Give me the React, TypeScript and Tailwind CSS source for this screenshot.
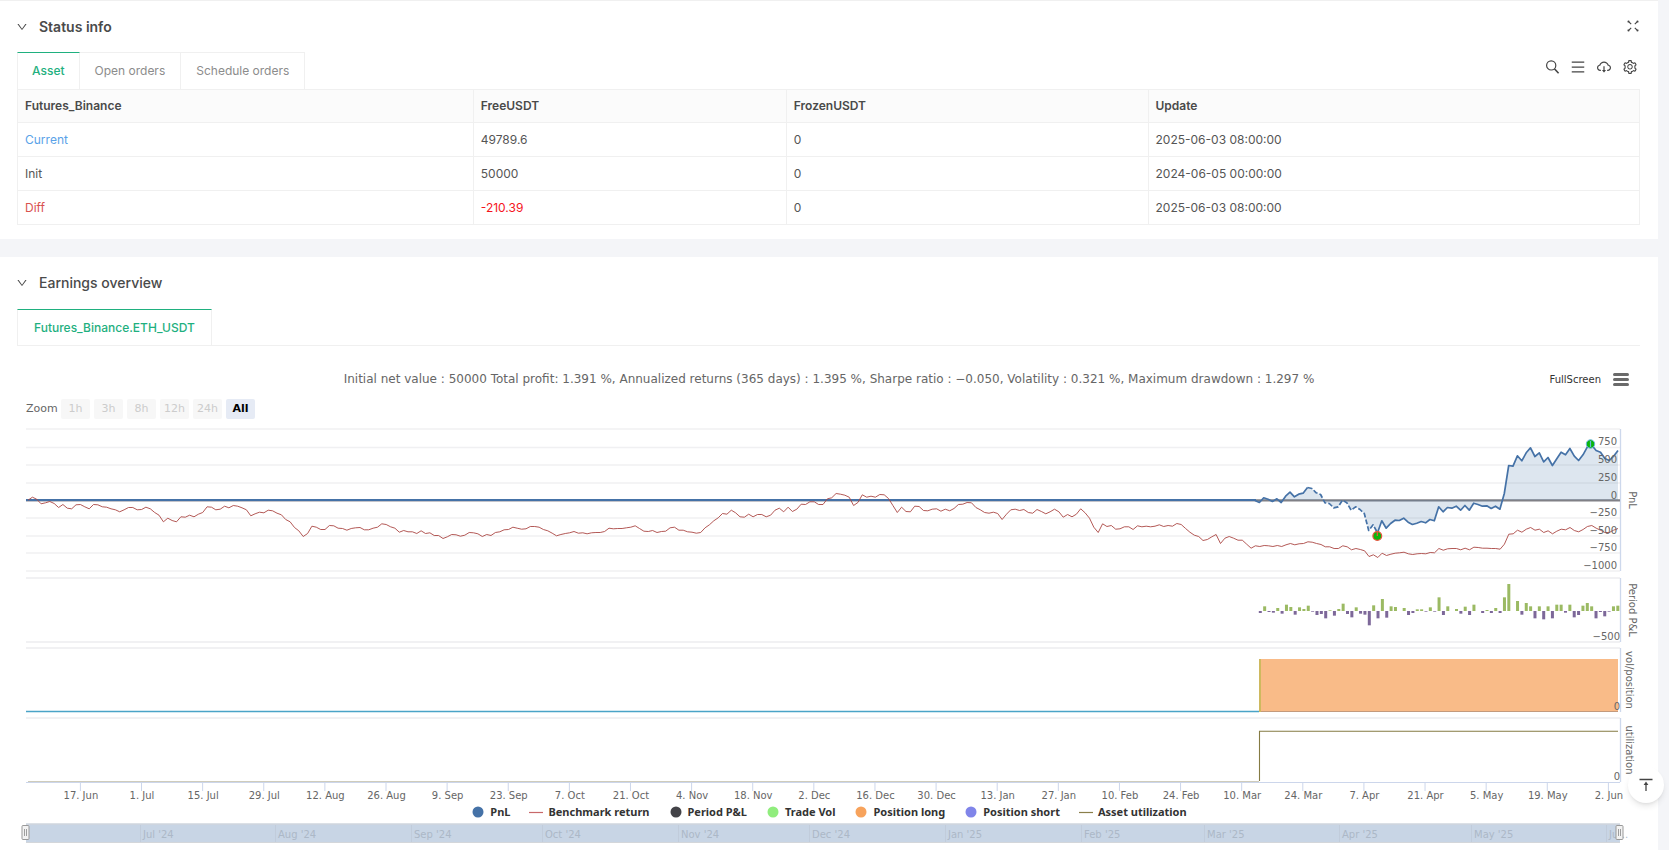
import { useState } from "react";
import {
  AiOutlineCloudDownload,
  AiOutlineDown,
  AiOutlineMenu,
  AiOutlineSetting,
} from "react-icons/ai";

const assetRows = [
  { name: "Current", free: "49789.6", frozen: "0", update: "2025-06-03 08:00:00", nameColor: "text-[#5aa2e8]", freeColor: "" },
  { name: "Init", free: "50000", frozen: "0", update: "2024-06-05 00:00:00", nameColor: "", freeColor: "" },
  { name: "Diff", free: "-210.39", frozen: "0", update: "2025-06-03 08:00:00", nameColor: "text-[#d9534f]", freeColor: "text-[#f5141c]" },
];

const zoomRanges = ["1h", "3h", "8h", "12h", "24h", "All"];

const legendItems = [
  { label: "PnL", color: "#4572a7", shape: "dot" },
  { label: "Benchmark return", color: "#c8686a", shape: "line" },
  { label: "Period P&L", color: "#434348", shape: "dot" },
  { label: "Trade Vol", color: "#90ed7d", shape: "dot" },
  { label: "Position long", color: "#f7a35c", shape: "dot" },
  { label: "Position short", color: "#8085e9", shape: "dot" },
  { label: "Asset utilization", color: "#8a7f4a", shape: "line" },
];

const xLabels = [
  "17. Jun", "1. Jul", "15. Jul", "29. Jul", "12. Aug", "26. Aug", "9. Sep", "23. Sep", "7. Oct",
  "21. Oct", "4. Nov", "18. Nov", "2. Dec", "16. Dec", "30. Dec", "13. Jan", "27. Jan", "10. Feb",
  "24. Feb", "10. Mar", "24. Mar", "7. Apr", "21. Apr", "5. May", "19. May", "2. Jun",
];

const pnlLabels = [
  { text: "750", y: 445 },
  { text: "500", y: 463 },
  { text: "250", y: 481 },
  { text: "0", y: 499 },
  { text: "−250", y: 516 },
  { text: "−500", y: 534 },
  { text: "−750", y: 551 },
  { text: "−1000", y: 569 },
];

const months = [
  { text: "Jul '24", x: 140 },
  { text: "Aug '24", x: 275 },
  { text: "Sep '24", x: 411 },
  { text: "Oct '24", x: 542 },
  { text: "Nov '24", x: 678 },
  { text: "Dec '24", x: 809 },
  { text: "Jan '25", x: 945 },
  { text: "Feb '25", x: 1081 },
  { text: "Mar '25", x: 1204 },
  { text: "Apr '25", x: 1339 },
  { text: "May '25", x: 1471 },
  { text: "Ju…", x: 1606 },
];

// one value per day, three units are one pixel of the plot
const benchmark = [
  1, 10, 4, -10, -7, -3, -9, -21, -12, -23, -25, -13, -12, -19, -25, -12, -13, -19, -20, -25,
  -28, -34, -28, -21, -21, -28, -27, -20, -25, -36, -44, -64, -53, -60, -64, -49, -50, -44, -49, -41,
  -36, -19, -20, -28, -26, -17, -22, -15, -17, -22, -28, -46, -40, -35, -37, -29, -31, -38, -43, -57,
  -64, -81, -91, -108, -99, -77, -80, -87, -87, -75, -76, -83, -84, -89, -84, -82, -81, -88, -88, -83,
  -80, -70, -72, -79, -83, -95, -90, -94, -94, -99, -91, -99, -97, -105, -105, -114, -109, -102, -103, -107,
  -104, -96, -97, -100, -108, -102, -105, -96, -94, -88, -87, -80, -83, -86, -85, -78, -78, -80, -87, -91,
  -98, -106, -102, -99, -97, -93, -98, -97, -100, -97, -96, -96, -93, -83, -85, -84, -84, -82, -80, -76,
  -84, -92, -93, -90, -96, -93, -92, -82, -80, -89, -89, -94, -95, -98, -96, -82, -73, -61, -52, -39,
  -41, -29, -37, -49, -50, -41, -49, -42, -42, -49, -44, -29, -23, -34, -20, -33, -26, -11, -12, -4,
  -4, -12, -12, 5, 8, 21, 19, 16, 10, -15, -6, 17, 10, 13, 10, 18, 17, 6, -15, -36,
  -20, -33, -34, -17, -18, -30, -31, -26, -25, -32, -26, -31, -24, -12, -11, -6, -7, -21, -28, -36,
  -38, -35, -39, -57, -41, -28, -26, -30, -27, -36, -38, -27, -33, -40, -34, -26, -34, -50, -42, -49,
  -41, -25, -37, -53, -80, -96, -70, -78, -75, -86, -85, -79, -79, -87, -76, -79, -77, -79, -77, -73,
  -78, -75, -77, -69, -72, -84, -95, -104, -108, -120, -117, -109, -102, -129, -113, -108, -113, -119, -119, -131,
  -143, -136, -138, -135, -136, -138, -135, -138, -133, -129, -133, -130, -129, -124, -125, -129, -132, -139, -139, -144,
  -144, -136, -139, -148, -144, -147, -151, -168, -163, -171, -158, -165, -161, -158, -157, -155, -160, -162, -160, -159,
  -160, -156, -157, -144, -149, -145, -144, -144, -148, -143, -148, -140, -141, -143, -143, -144, -144, -146, -131, -101,
  -100, -89, -95, -86, -81, -89, -86, -96, -91, -100, -92, -86, -88, -81, -90, -94, -87, -78, -75, -83,
  -89, -96, -96, -89, -84,
];

const pnl = [
  0, -6, 8, 4, -3, 5, -6, 13, 25, 11, 19, 22, 39, 36, 23, 18, -7, -9, -22, -19,
  1, -7, -29, -19, -27, -39, -90, -73, -97, -61, -83, -69, -59, -60, -53, -65, -72, -68, -63, -67,
  -57, -61, -19, -34, -21, -23, -17, -29, -15, -29, -8, -12, -17, -16, -24, -17, -26, 21, 105, 103,
  134, 119, 143, 158, 132, 143, 116, 129, 105, 125, 145, 137, 156, 133, 120, 137, 161, 166, 150, 145,
  126, 120, 133, 150,
];

const periodBars = [
  -6, 14, -3, -5, 9, -8, 19, 12, -11, 11, 6, 16, -2, -12, -9, -22, 2, -14, 6, 22,
  -9, -19, 11, -8, -11, -43, 17, -22, 36, -20, 14, 12, 0, 9, -12, -6, 5, 5, -2, 11,
  -2, 41, -12, 14, 0, 6, -8, 13, -12, 19, 0, -6, 3, -6, 9, -6, 41, 81, 0, 30,
  -11, 24, 14, -22, 14, -25, 14, -22, 19, 19, -5, 19, -19, -12, 16, 24, 14, -22, -3, -16,
  -2, 14, 16,
];

const DASH_START = 12;
const DASH_END = 28;

const ZERO_Y = 500;

function toPoints(values: number[], from: number, to: number) {
  const step = (to - from) / (values.length - 1);
  return values.map((v, i) => `${(from + i * step).toFixed(1)},${(ZERO_Y + 0.5 - v / 3).toFixed(1)}`);
}

const benchmarkPoints = toPoints(benchmark, 28, 1618);
const pnlPoints = toPoints(pnl, 1255, 1618);

function SearchIcon() {
  return (
    <svg viewBox="0 0 16 16" className="size-4" fill="none" stroke="currentColor" strokeWidth="1.2">
      <circle cx="7.2" cy="6.4" r="4.6" />
      <path d="M10.4 9.8 14.6 14.2" strokeWidth="1.6" />
    </svg>
  );
}

function ShrinkIcon() {
  return (
    <svg viewBox="0 0 12 12" className="size-3" fill="none" stroke="currentColor" strokeWidth="1.1">
      <path d="M1 1l3.2 3.2M11 1 7.8 4.2M1 11l3.2-3.2M11 11 7.8 7.8" />
      <path d="M1.2 2.4V1.2h1.2M9.6 1.2h1.2v1.2M1.2 9.6v1.2h1.2M9.6 10.8h1.2V9.6" />
    </svg>
  );
}

function ToTopIcon() {
  return (
    <svg viewBox="0 0 16 16" className="size-4" fill="none" stroke="currentColor" strokeWidth="1.3">
      <path d="M1.5 2.5h13M8 6v8" />
      <path d="M8 4.6 10.4 8H5.6Z" fill="currentColor" stroke="none" />
    </svg>
  );
}

function SectionTitle({ title, bold }: { title: string; bold?: boolean }) {
  return (
    <button type="button" className="flex items-center gap-[11px] text-[#4a4a4a]">
      <AiOutlineDown className="size-3" />
      <h2 className={bold ? "text-sm font-semibold" : "text-sm font-medium"}>{title}</h2>
    </button>
  );
}

function StatusInfo() {
  const [tab, setTab] = useState("Asset");
  return (
    <section className="border-t border-[#f0f0f0] bg-white px-4 pt-3.5 pb-3.5">
      <div className="flex h-6 items-center justify-between">
        <SectionTitle title="Status info" bold />
        <button type="button" aria-label="Shrink" className="pr-[3px] pb-[3px] text-[#444]">
          <ShrinkIcon />
        </button>
      </div>

      <div className="mt-[13px] flex items-end justify-between">
        <div role="tablist" className="flex pl-px text-xs">
          {["Asset", "Open orders", "Schedule orders"].map((t) => (
            <button
              key={t}
              type="button"
              role="tab"
              aria-selected={tab === t}
              onClick={() => setTab(t)}
              className={
                tab === t
                  ? "h-[37px] border-t border-r border-l border-t-[#1fb07f] border-r-[#f0f0f0] border-l-[#f0f0f0] px-3.5 font-medium text-[#1fb07f]"
                  : "h-[37px] border-t border-r border-[#f0f0f0] px-[15px] text-[#8c8c8c]"
              }
            >
              {t}
            </button>
          ))}
        </div>
        <div className="flex items-center gap-2.5 pr-1 pb-3.5 text-[#444]">
          <button type="button" aria-label="Search"><SearchIcon /></button>
          <button type="button" aria-label="List"><AiOutlineMenu className="size-4" /></button>
          <button type="button" aria-label="Download"><AiOutlineCloudDownload className="size-4" /></button>
          <button type="button" aria-label="Settings"><AiOutlineSetting className="size-4" /></button>
        </div>
      </div>

      <div className="pr-0.5 pl-px">
        <table className="w-full table-fixed border-collapse text-left text-xs text-[#555]">
          <colgroup>
            <col className="w-[28.1%]" />
            <col className="w-[19.3%]" />
            <col className="w-[22.3%]" />
            <col />
          </colgroup>
          <thead>
            <tr className="h-[33px] bg-[#fbfbfb] text-[#4a4a4a]">
              {["Futures_Binance", "FreeUSDT", "FrozenUSDT", "Update"].map((h) => (
                <th key={h} className="border border-[#f0f0f0] px-[7px] font-semibold">{h}</th>
              ))}
            </tr>
          </thead>
          <tbody>
            {assetRows.map((row) => (
              <tr key={row.name} className="h-[34px]">
                <td className={`border border-[#f0f0f0] px-[7px] ${row.nameColor}`}>{row.name}</td>
                <td className={`border border-[#f0f0f0] px-[7px] ${row.freeColor}`}>{row.free}</td>
                <td className="border border-[#f0f0f0] px-[7px]">{row.frozen}</td>
                <td className="border border-[#f0f0f0] px-[7px]">{row.update}</td>
              </tr>
            ))}
          </tbody>
        </table>
      </div>
    </section>
  );
}

function Plot() {
  return (
    <svg viewBox="0 424 1658 380" className="block w-full" role="img" aria-label="Profit chart" fontSize="10">
      {/* grid */}
      {[429, 447.5, 465, 483, 518, 536, 553, 571].map((y) => (
        <path key={y} d={`M26 ${y}H1620`} stroke="#f0f0f2" strokeWidth="1.6" />
      ))}
      {[578, 642, 648, 718].map((y) => (
        <path key={y} d={`M26 ${y}H1620`} stroke="#ededef" strokeWidth="1.6" />
      ))}
      <path d="M1620.5 429V571M1620.5 578V642M1620.5 648V712M1620.5 718V782" stroke="#cdd8ec" strokeWidth="1.3" />

      {/* pnl */}
      <path d="M26 501.5H1256" stroke="#c4c4ca" />
      <path d="M1256 500.4H1620" stroke="#808086" strokeWidth="2.4" />
      <path d={`M1255 ${ZERO_Y}L${pnlPoints.join("L")}L1618 ${ZERO_Y}Z`} fill="#4572a7" fillOpacity="0.18" />
      <path d="M26 500H1256" stroke="#4572a7" strokeWidth="2" />
      <g fill="none" stroke="#4572a7" strokeWidth="1.7" strokeLinejoin="round">
        <polyline points={pnlPoints.slice(0, DASH_START + 1).join(" ")} />
        <polyline points={pnlPoints.slice(DASH_START, DASH_END + 1).join(" ")} strokeDasharray="5 2" />
        <polyline points={pnlPoints.slice(DASH_END).join(" ")} />
      </g>
      <polyline points={benchmarkPoints.join(" ")} fill="none" stroke="#aa4643" strokeWidth="0.9" />
      <circle cx="1377.3" cy="536" r="4.4" fill="#0bb60b" stroke="#e8543f" strokeWidth="1.2" />
      <path d="M1377.3 531v5" stroke="#e8543f" strokeWidth="1.2" />
      <circle cx="1590.5" cy="444" r="4.2" fill="#0bb60b" stroke="#6bb6e0" strokeWidth="1" />
      <path d="M1590.5 441v6" stroke="#6bb6e0" strokeWidth="1.2" />

      {/* period p&l */}
      {periodBars.map((v, i) => (
        <rect
          key={i}
          x={1258.8 + i * 4.36}
          y={v > 0 ? 611 - v / 3 : 611}
          width="3"
          height={Math.abs(v) / 3}
          fill={v > 0 ? "#9bba63" : "#7d6899"}
        />
      ))}

      {/* position */}
      <path d="M1259 659H1618V712H1259Z" fill="#f9bb88" />
      <path d="M26 711.5H1259" stroke="#4aa3c7" strokeWidth="1.4" />
      <path d="M1259 711.5H1618" stroke="#c49a7c" strokeWidth="1.2" />
      <path d="M1260 659V712" stroke="#ceb95f" strokeWidth="2" />

      {/* utilization */}
      <path d="M26 782.5H1620" stroke="#ccd6eb" />
      <path d="M28 781.5H1259" stroke="#cfccbb" />
      <path d="M1259.5 781V731.3H1618" fill="none" stroke="#857b43" strokeWidth="1.1" />

      {/* x axis */}
      {xLabels.map((label, i) => (
        <g key={label}>
          <path d={`M${80.4 + i * 61.12} 782V791`} stroke="#ccd6eb" />
          <text x={80.9 + i * 61.12} y="799" textAnchor="middle" fill="#666">{label}</text>
        </g>
      ))}

      {/* y axis labels */}
      <g fill="#666" textAnchor="end">
        {pnlLabels.map((l) => (
          <text key={l.text} x="1617" y={l.y}>{l.text}</text>
        ))}
        <text x="1620" y="640">−500</text>
        <text x="1620" y="710">0</text>
        <text x="1620" y="780">0</text>
      </g>
      <g fill="#666" textAnchor="middle">
        <text transform="translate(1629 500) rotate(90)">PnL</text>
        <text transform="translate(1629 610) rotate(90)">Period P&amp;L</text>
        <text transform="translate(1626 680) rotate(90)">vol/position</text>
        <text transform="translate(1626 750) rotate(90)">utilization</text>
      </g>
    </svg>
  );
}

function Handle({ x }: { x: number }) {
  return (
    <g>
      <rect x={x - 3.5} y="825.5" width="7" height="14" rx="1" fill="#f2f2f2" stroke="#999" />
      <path d={`M${x - 1} 829v7M${x + 1} 829v7`} stroke="#888" strokeWidth="0.8" />
    </g>
  );
}

function Navigator() {
  return (
    <svg viewBox="0 820 1658 26" className="block w-full" role="img" aria-label="Date range" fontSize="10">
      <rect x="26" y="823.5" width="1594" height="19" fill="#c8d5e5" />
      <path d="M26 824H1620M26 842.5H1620" stroke="#d3d6da" />
      {months.map((m) => (
        <g key={m.x}>
          <path d={`M${m.x + 0.5} 825V842`} stroke="#c1ccdb" />
          <text x={m.x + 3} y="838" fill="#acb8c7">{m.text}</text>
        </g>
      ))}
      <Handle x={25.5} />
      <Handle x={1619.5} />
    </svg>
  );
}

function EarningsOverview() {
  const [range, setRange] = useState("All");
  return (
    <section className="grow bg-white pt-3.5">
      <div className="flex h-6 items-center px-4">
        <SectionTitle title="Earnings overview" />
      </div>
      <div role="tablist" className="mt-3.5 mr-[18px] ml-[17px] flex border-b border-[#f0f0f0]">
        <button
          type="button"
          role="tab"
          aria-selected="true"
          className="h-9 border-t border-r border-l border-t-[#1fb07f] border-r-[#f0f0f0] border-l-[#f0f0f0] px-4 text-xs font-medium text-[#1fb07f]"
        >
          Futures_Binance.ETH_USDT
        </button>
      </div>

      <div className="font-['DejaVu_Sans',sans-serif]">
        <div className="mt-[23px] grid grid-cols-[1fr_auto_1fr] items-center text-[#666]">
          <p className="col-start-2 text-xs leading-5">
            Initial net value : 50000 Total profit: 1.391 %, Annualized returns (365 days) : 1.395 %, Sharpe ratio : −0.050, Volatility : 0.321 %, Maximum drawdown : 1.297 %
          </p>
          <div className="flex items-center justify-end gap-3 pt-px pr-[29px]">
            <button type="button" className="text-[10px] text-[#333]">FullScreen</button>
            <button type="button" aria-label="Chart menu" className="flex w-4 flex-col gap-0.5">
              <span className="h-[3px] rounded-xs bg-[#6a6a6a]" />
              <span className="h-[3px] rounded-xs bg-[#6a6a6a]" />
              <span className="h-[3px] rounded-xs bg-[#6a6a6a]" />
            </button>
          </div>
        </div>

        <div className="mt-2.5 flex items-center gap-1 pl-[26px] text-[11px] text-[#666]">
          <span className="w-[31px]">Zoom</span>
          {zoomRanges.map((r) => (
            <button
              key={r}
              type="button"
              onClick={() => setRange(r)}
              className={
                range === r
                  ? "h-5 w-[29px] rounded-xs bg-[#e6ebf5] font-bold text-black"
                  : "h-5 w-[29px] rounded-xs bg-[#f7f7f7] text-[#ccc]"
              }
            >
              {r}
            </button>
          ))}
        </div>

        <div className="mt-[5px]">
          <Plot />
        </div>
        <ul className="flex h-4 items-center justify-center gap-[19px] font-['Noto_Sans',sans-serif] text-[11px] font-bold text-[#333]">
          {legendItems.map((item) => (
            <li key={item.label}>
              <button type="button" className="flex items-center gap-[5px]">
                <svg viewBox="0 0 14 12" className="h-3 w-3.5">
                  {item.shape === "dot" ? (
                    <circle cx="7" cy="6" r="5.5" fill={item.color} />
                  ) : (
                    <path d="M0 6.5H14" stroke={item.color} strokeWidth="1.2" />
                  )}
                </svg>
                {item.label}
              </button>
            </li>
          ))}
        </ul>
        <Navigator />
      </div>
    </section>
  );
}

export default function App() {
  return (
    <div className="flex min-h-screen flex-col bg-[#f4f5f8] pr-[11px] font-[Inter,sans-serif]">
      <StatusInfo />
      <div className="h-[18px]" />
      <EarningsOverview />
      <button
        type="button"
        aria-label="Back to top"
        className="fixed right-[5px] bottom-[47px] flex size-9 items-center justify-center rounded-full bg-white text-[#444] shadow-md"
      >
        <ToTopIcon />
      </button>
    </div>
  );
}
